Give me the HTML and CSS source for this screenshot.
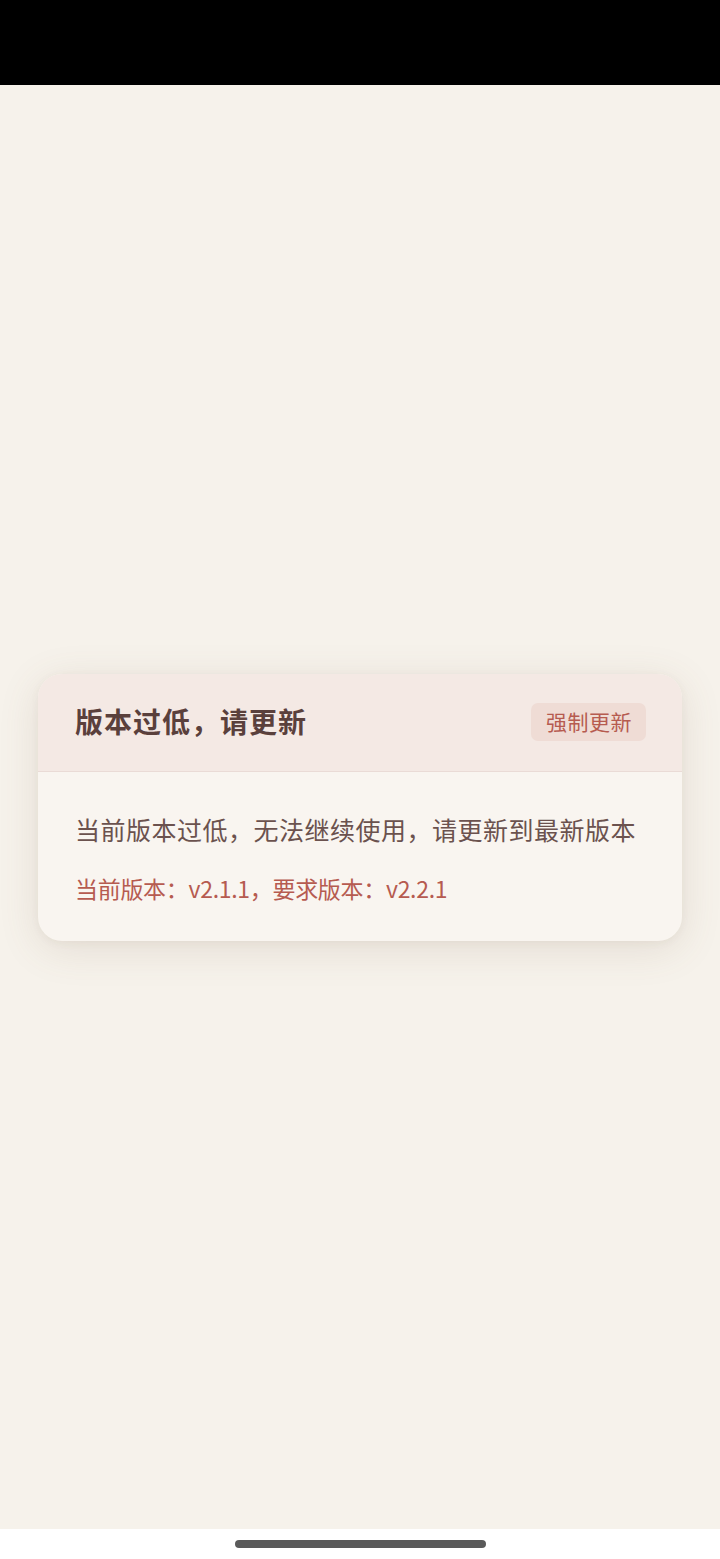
FILE: index.html
```html
<!DOCTYPE html>
<html lang="zh-CN">
<head>
  <meta charset="UTF-8">
  <title>版本过低</title>
  <link rel="stylesheet" href="styles.css">
</head>
<body>
  <div class="status-bar"></div>
  <main class="screen">
    <section class="dialog">
      <header class="dialog-head">
        <h1 class="dialog-title">版本过低，请更新</h1>
        <span class="badge">强制更新</span>
      </header>
      <div class="dialog-body">
        <p class="msg">当前版本过低，无法继续使用，请更新到最新版本</p>
        <p class="ver">当前版本：v2.1.1，要求版本：v2.2.1</p>
      </div>
    </section>
  </main>
  <div class="nav-bar"><span class="home-pill"></span></div>
</body>
</html>
```

FILE: styles.css
```css
/* update-required dialog */
:root {
  --page-bg:   #f6f2eb;
  --card-bg:   #f9f5f0;
  --head-bg:   #f4e9e4;
  --line:      #eadbd6;
  --title:     #5a403c;
  --text:      #6b524e;
  --accent:    #b65b50;
  --badge-bg:  #efdcd5;
}

html, body {
  margin: 0;
  height: 100%;
}
body {
  display: flex;
  flex-direction: column;
  background: var(--page-bg);
  font-family: "Noto Sans CJK SC", "Noto Sans", sans-serif;
}

.status-bar {
  height: 85px;
  background: #000;
  flex: none;
}

.screen {
  flex: 1;
  display: flex;
  align-items: center;
  justify-content: center;
}

.dialog {
  width: 644px;
  background: var(--card-bg);
  border-radius: 24px;
  overflow: hidden;
  box-shadow: 0 8px 40px rgba(120, 95, 70, 0.14), 0 2px 8px rgba(120, 95, 70, 0.06);
}

.dialog-head {
  height: 97px;
  display: flex;
  align-items: center;
  justify-content: space-between;
  padding: 0 36px 0 37px;
  background: var(--head-bg);
  border-bottom: 1px solid var(--line);
}
.dialog-title {
  margin: 0 0 3px;
  font-size: 28px;
  font-weight: 600;
  letter-spacing: 1px;
  color: var(--title);
}
.badge {
  padding: 3px 14px 5px 15px;
  border-radius: 7px;
  background: var(--badge-bg);
  color: var(--accent);
  font-size: 21px;
  letter-spacing: 0.5px;
}

.dialog-body {
  padding: 40px 37px 36px;
}
.dialog-body p {
  margin: 0;
  line-height: 34px;
}
.msg {
  font-size: 25px;
  letter-spacing: 0.5px;
  color: var(--text);
}
.ver {
  margin-top: 25px !important;
  font-size: 23px;
  letter-spacing: -0.3px;
  color: var(--accent);
}

.nav-bar {
  height: 30px;
  flex: none;
  background: #fff;
  display: flex;
  justify-content: center;
  align-items: center;
}
.home-pill {
  width: 251px;
  height: 8px;
  border-radius: 4px;
  background: #5a5a5a;
}
```
